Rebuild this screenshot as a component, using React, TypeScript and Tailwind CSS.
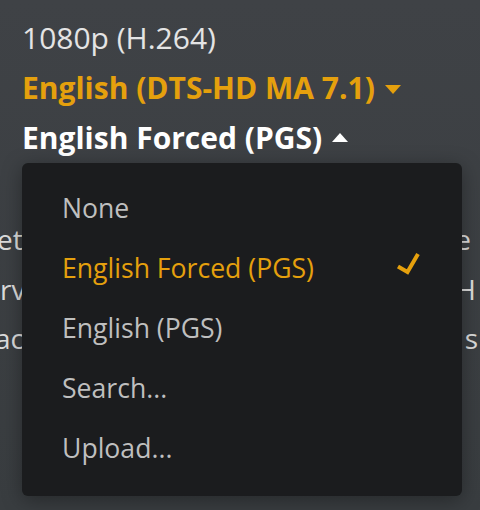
import React from 'react';

const items = ['None', 'English Forced (PGS)', 'English (PGS)', 'Search...', 'Upload...'];

const Caret: React.FC<{ up?: boolean; className?: string }> = ({ up, className }) => (
  <svg width="16" height="9" viewBox="0 0 16 9" className={className}>
    {up ? <polygon points="0,9 16,9 8,0" fill="currentColor" /> : <polygon points="0,0 16,0 8,9" fill="currentColor" />}
  </svg>
);

const App: React.FC = () => {
  return (
    <div
      className="relative w-[480px] h-[510px] overflow-hidden bg-gradient-to-b from-[#3f4246] to-[#393d40] text-[#e2e2e2]"
      style={{ fontFamily: '"Open Sans", "Noto Sans", sans-serif' }}
    >
      {/* Stream info */}
      <div className="pt-[13px] pl-[22px] text-[30px] leading-[50px]">
        <div className="text-[#e4e4e4]">1080p (H.264)</div>
        <div className="flex items-center gap-[10px] font-bold text-[#e5a00d]">
          <span>English (DTS-HD MA 7.1)</span>
          <Caret className="mt-[2px]" />
        </div>
        <div className="flex items-center gap-[10px] font-bold text-white">
          <span>English Forced (PGS)</span>
          <Caret up className="mt-[-2px]" />
        </div>
      </div>

      {/* Summary text behind the menu */}
      <div className="mt-[51px] text-[28px] leading-[50px] text-[#dcdcdc]">
        <div className="flex justify-between">
          <span className="ml-[-3px]">etup</span>
          <span className="mr-[9px]">the</span>
        </div>
        <div className="flex justify-between">
          <span>rv</span>
          <span className="mr-[4px]">H</span>
        </div>
        <div className="flex justify-between mt-[-1px]">
          <span className="ml-[-5px]">ac</span>
          <span className="mr-[2px]">s</span>
        </div>
      </div>

      {/* Dropdown menu */}
      <div className="absolute left-[22px] top-[163px] w-[440px] h-[333px] rounded-[6px] bg-[#1b1c1e] py-4 shadow-[0_4px_20px_rgba(0,0,0,0.35)]">
        {items.map((item) => {
          const active = item === 'English Forced (PGS)';
          return (
            <div
              key={item}
              className={`flex h-[60px] items-center justify-between pl-10 pr-[42px] text-[26.6px] ${
                active ? 'text-[#e5a00d]' : 'text-[#bfbfbf]'
              }`}
            >
              <span>{item}</span>
              {active && (
                <svg width="24" height="24" viewBox="0 0 24 24" className="mt-[-12px]">
                  <polyline points="2,15.5 11.5,21 22,3" fill="none" stroke="#e5a00d" strokeWidth="4" />
                </svg>
              )}
            </div>
          );
        })}
      </div>
    </div>
  );
};

export default App;
